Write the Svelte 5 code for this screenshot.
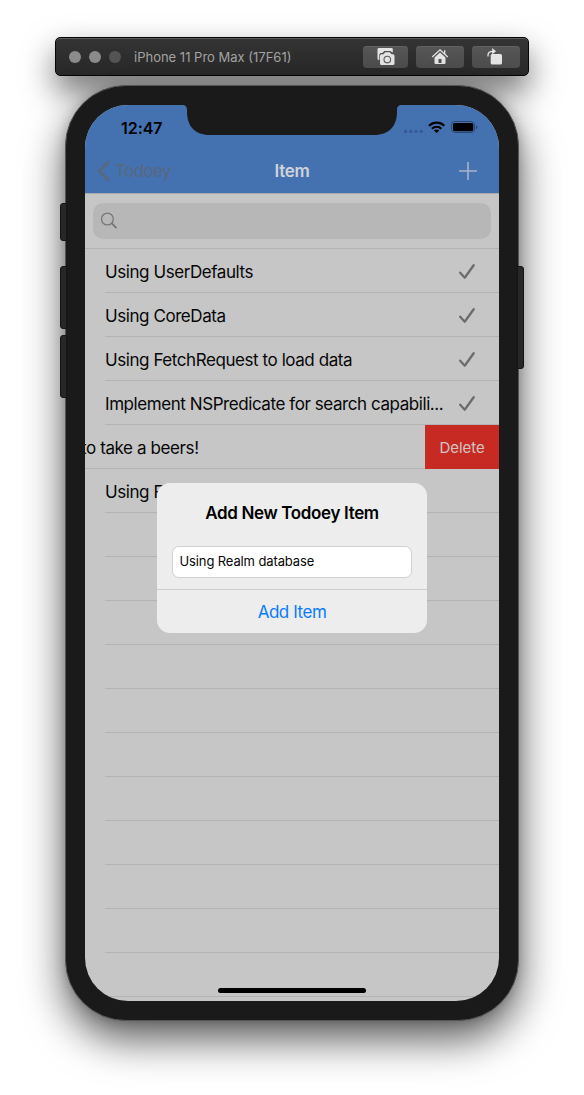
<script>
  const items = [
    { text: 'Using UserDefaults', done: true },
    { text: 'Using CoreData', done: true },
    { text: 'Using FetchRequest to load data', done: true },
    { text: 'Implement NSPredicate for search capabili...', done: true },
    { text: 'to take a beers!', swiped: true },
    { text: 'Using F' }
  ];
  const blanks = Array.from({ length: 11 });
</script>

<main>
  <header class="window">
    <i class="light"></i><i class="light"></i><i class="light dim"></i>
    <span class="device">iPhone 11 Pro Max (17F61)</span>
    <div class="tools">
      <button class="tool first" aria-label="Screenshot">
        <svg width="18" height="18" viewBox="0 0 18 18">
          <path d="M1.500 0H14.500a1.300 1.300 0 0 1 1.300 1.300V4.400L13.300 2.900H7.300L5.400 5H3.500L2.300 6.500V12H2a1.500 1.500 0 0 1-1.500-1.500V1.500A1.500 1.500 0 0 1 1.500 0Z" fill="#e4e4e4"/>
          <path d="M4.500 6.300h2L8.200 4.200h4.600l1.700 2.100h1.500A1.500 1.500 0 0 1 17.500 7.800v7.700A1.500 1.500 0 0 1 16 17H4.500A1.500 1.500 0 0 1 3 15.500V7.800a1.500 1.500 0 0 1 1.500-1.500Z" fill="#e4e4e4"/>
          <circle cx="10.300" cy="11.600" r="3.300" fill="none" stroke="#5c5c5c" stroke-width="1.100"/>
        </svg>
      </button>
      <button class="tool" aria-label="Home">
        <svg width="18" height="18" viewBox="0 0 18 18">
          <path d="M1.200 9 9 1.800 16.800 9M13.700 2.300v4" fill="none" stroke="#e4e4e4" stroke-width="1.300"/>
          <path d="M9 4.400 14.500 9.500V15a1 1 0 0 1-1 1h-9a1 1 0 0 1-1-1V9.500Z" fill="#e4e4e4"/>
          <path d="M7.500 11h3v4h-3z" fill="#505050"/>
        </svg>
      </button>
      <button class="tool" aria-label="Rotate">
        <svg class="rotate" width="18" height="18" viewBox="0 0 18 18">
          <rect x="4.700" y="6" width="11.300" height="10.500" rx="1.600" fill="#e4e4e4"/>
          <path d="M2 8.500C1.500 5 3.500 3.300 7 3.300" fill="none" stroke="#e4e4e4" stroke-width="1.300"/>
          <path d="M6.200 0v6.400l3.800-3.200Z" fill="#e4e4e4"/>
        </svg>
      </button>
    </div>
  </header>

  <div class="phone">
    <b class="side mute"></b><b class="side up"></b><b class="side down"></b><b class="side power"></b>
    <div class="screen">
      <div class="top">
        <svg class="notch" width="220" height="30" viewBox="0 0 220 30">
          <path d="M0 0h220c-3.500 0-5 1.500-5 5v2c0 14-8 23-23 23H28C13 30 5 21 5 7V5C5 1.500 3.500 0 0 0Z" fill="#1a1a1a"/>
        </svg>
        <div class="status">
          <span class="time">12:47</span>
          <svg width="76" height="14" viewBox="0 0 76 14">
            <g fill="#335a93"><circle cx="3.600" cy="11.500" r="1.700"/><circle cx="8.800" cy="11.500" r="1.700"/><circle cx="14" cy="11.500" r="1.700"/><circle cx="19.200" cy="11.500" r="1.700"/></g>
            <g fill="none" stroke="#000" stroke-width="2.200"><path d="M27 5.700c4.300-4.200 11-4.200 15.300 0M29.900 8.700c2.700-2.600 6.800-2.600 9.500 0"/></g>
            <path d="M34.650 13.100 31.900 10.500c1.600-1.300 3.900-1.300 5.500 0Z"/>
            <rect x="49.500" y="1.500" width="23" height="11" rx="3.200" fill="none" stroke="#284872"/>
            <rect x="51" y="3" width="20.300" height="8.200" rx="1.600"/>
            <path d="M74 5.200c2 .8 2 3 0 3.800Z" fill="#284872"/>
          </svg>
        </div>
        <nav>
          <div class="back">
            <svg width="13" height="22" viewBox="0 0 13 22"><path d="M11.700 1.500 2.400 11l9.300 9.500" fill="none" stroke="#58687f" stroke-width="2.800"/></svg>
            <span>Todoey</span>
          </div>
          <span class="title">Item</span>
          <svg class="plus" width="18" height="18" viewBox="0 0 18 18"><path d="M9 0v18M0 9h18" stroke="#a9b4c8" stroke-width="1.600"/></svg>
        </nav>
      </div>

      <div class="searchbar">
        <div class="search">
          <svg width="18" height="18" viewBox="0 0 18 18"><circle cx="7.400" cy="7" r="5.900" fill="none" stroke="#777" stroke-width="1.300"/><path d="m11.600 11.200 4.900 4.900" stroke="#777" stroke-width="1.900"/></svg>
        </div>
      </div>

      <ul>
        {#each items as item}
          <li class:swiped={item.swiped}>
            <div class="cell">
              <span class="label">{item.text}</span>
              {#if item.done}
                <svg width="18" height="18" viewBox="0 0 18 18"><path d="m2.200 9.700 4.500 5L15.700 2.300" fill="none" stroke="#6c6c6c" stroke-width="2.300" stroke-linecap="round" stroke-linejoin="round"/></svg>
              {/if}
            </div>
            {#if item.swiped}<button class="delete"><span>Delete</span></button>{/if}
          </li>
        {/each}
        {#each blanks as _}
          <li><div class="cell"></div></li>
        {/each}
      </ul>

      <div class="homebar"></div>

      <section class="alert">
        <h2><span>Add New Todoey Item</span></h2>
        <div class="field"><span>Using Realm database</span></div>
        <button class="add"><span>Add Item</span></button>
      </section>
    </div>
  </div>
</main>

<style>
  :global(body) { background: #fff; }
  * { box-sizing: border-box; }
  main {
    width: 584px;
    height: 1095px;
    overflow: hidden;
    padding-top: 37px;
    display: flex;
    flex-direction: column;
    align-items: center;
    gap: 9px;
    font-family: Inter, "Liberation Sans", sans-serif;
    color: #060606;
  }
  button { border: 0; padding: 0; margin: 0; font: inherit; }
  svg { display: block; flex: none; }
  span { white-space: nowrap; }
  .window {
    width: 474px;
    height: 39px;
    flex: none;
    border: 1px solid #050505;
    border-radius: 5px;
    background: linear-gradient(#343434, #282828);
    box-shadow: inset 0 1px 0 #5a5a5a, 0 15px 32px rgba(0, 0, 0, .56);
    display: flex;
    align-items: center;
    padding: 0 8px 0 13px;
  }
  .light { width: 12px; height: 12px; border-radius: 50%; background: #8b8b8b; margin-right: 8px; }
  .light.dim { background: #555; margin-right: 13px; }
  .device { font-size: 13px; color: #a4a4a4; letter-spacing: 0; }
  .tools { display: flex; gap: 8px; margin-left: auto; }
  .tool {
    width: 48px;
    height: 22px;
    border-radius: 4px;
    background: linear-gradient(#565656, #4d4d4d);
    box-shadow: inset 0 1px 0 #626262;
    display: grid;
    place-items: center;
  }
  .tool.first { width: 45px; }
  .rotate { margin-right: 3px; }
  .phone {
    position: relative;
    width: 454px;
    height: 936px;
    flex: none;
    padding: 19px;
    border: 1px solid #555;
    border-radius: 61px;
    background: #1a1a1a;
    box-shadow: 0 18px 42px rgba(0, 0, 0, .66), 0 0 12px rgba(0, 0, 0, .18);
  }
  .side { position: absolute; width: 7px; left: -6px; background: #272727; border: 1px solid #151515; border-radius: 3px 0 0 3px; }
  .mute { top: 117px; height: 38px; }
  .up { top: 180px; height: 63px; }
  .down { top: 249px; height: 63px; }
  .power { left: auto; right: -6px; top: 180px; height: 103px; border-radius: 0 3px 3px 0; }
  .screen {
    position: relative;
    width: 414px;
    height: 896px;
    overflow: hidden;
    border-radius: 43px;
    background: #c6c6c6;
  }
  .top { height: 88px; background: #4472b1; position: relative; }
  .notch { position: absolute; left: 97px; top: 0; }
  .status { height: 44px; display: flex; justify-content: space-between; padding: 15px 21px 0 36px; }
  .time { font-size: 16px; line-height: 16px; font-weight: 600; letter-spacing: -.05px; color: #000; }
  nav { height: 44px; display: grid; grid-template-columns: 1fr auto 1fr; align-items: center; padding: 0 22px 0 12px; font-size: 17px; }
  .back { display: flex; align-items: center; gap: 5px; color: #58687f; }
  .back span { letter-spacing: -.6px; }
  .title { font-weight: 600; color: #cfd3d9; letter-spacing: -.3px; margin-left: 10px; }
  .plus { justify-self: end; }
  .searchbar { height: 56px; padding: 10px 8px; border-top: 1px solid #a9a9a9; border-bottom: 1px solid #b3b3b3; }
  .search { height: 36px; margin-top: -1px; border-radius: 10px; background: #b7b7b7; display: flex; align-items: center; padding-left: 7px; }
  ul { list-style: none; margin: 0; padding: 0; }
  li { height: 44px; display: flex; padding-left: 20px; font-size: 17px; }
  .cell { flex: 1; min-width: 0; height: 44px; border-bottom: 1px solid #b3b3b3; display: flex; align-items: center; justify-content: space-between; padding: 3px 23px 0 0; }
  .swiped { padding-left: 0; }
  .swiped .cell { padding-right: 0; }
  .label { letter-spacing: -.43px; line-height: 22px; }
  .swiped .label { margin-left: -4px; letter-spacing: -.4px; }
  .delete { width: 74px; height: 44px; background: #c62a22; color: #d0c4c3; font-size: 15px; letter-spacing: -.05px; }
  .homebar { position: absolute; left: 133px; bottom: 8px; width: 148px; height: 5px; border-radius: 3px; background: #000; }
  .alert {
    position: absolute;
    left: 72px;
    top: 378px;
    width: 270px;
    height: 150px;
    border-radius: 13px;
    background: #ededed;
    display: flex;
    flex-direction: column;
    overflow: hidden;
  }
  h2 { margin: 19px 0 0; font-size: 17px; line-height: 22px; font-weight: 600; text-align: center; letter-spacing: -.35px; color: #000; }
  .field { margin: 22px 15px 11px; height: 32px; border: 1px solid #d0d0d0; border-radius: 7px; background: #fff; padding: 0 6.500px; font-size: 13px; line-height: 29px; letter-spacing: -.12px; }
  .add { flex: 1; border-top: 1px solid #cecece; background: none; color: #0a7aff; font-size: 17px; letter-spacing: -.45px; padding-top: 1px; }
</style>
